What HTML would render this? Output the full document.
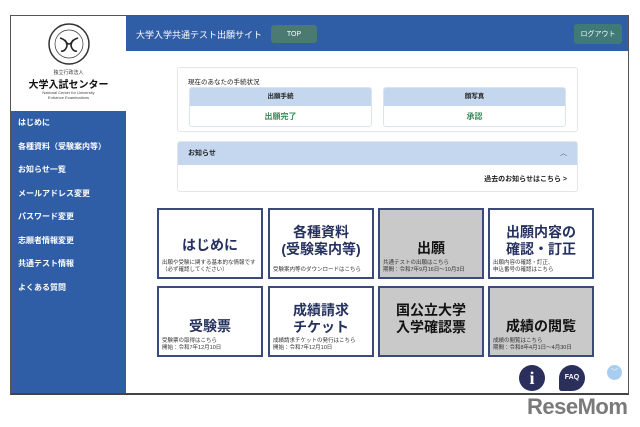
<!DOCTYPE html>
<html><head><meta charset="utf-8"><style>
*{margin:0;padding:0;box-sizing:border-box}
body{width:640px;height:427px;background:#fff;font-family:"Liberation Sans","Noto Sans CJK JP",sans-serif;position:relative;overflow:hidden}
.frame{position:absolute;left:10px;top:15px;width:619px;height:380px;border:1px solid #555;border-bottom:2px solid #444;overflow:hidden}
.side{position:absolute;left:0;top:0;width:115px;height:100%;background:#2f5da6}
.logo{position:absolute;left:0;top:0;width:115px;height:95px;background:#fff;text-align:center}
.nav{position:absolute;left:7px;color:#fff;font-size:8px;font-weight:bold}
.hdr{position:absolute;left:115px;top:0;right:0;height:35px;background:#2f5da6}
.a{position:absolute}
.btn{position:absolute;display:flex;align-items:center;justify-content:center;color:#fff;border-radius:3px;font-size:7px}
.panel{position:absolute;background:#fff;border:1px solid #e3e6ea;border-radius:3px}
.tile{position:absolute;width:106px;height:71px;border:2px solid #3c4a7a;background:#fff;color:#25315f;text-align:center}
.tile.g{background:#c9c9c9}
.tile .t{font-weight:bold;font-size:14px;line-height:17px;position:absolute;left:0;right:0}
.tile .s{position:absolute;left:3px;bottom:3px;font-size:5.5px;line-height:7px;text-align:left;color:#333}
</style></head><body>
<div class="frame">
<div class="side">
 <div class="logo">
  <svg width="44" height="44" viewBox="0 0 44 44" style="position:absolute;left:36px;top:6px"><circle cx="22" cy="22" r="20" fill="none" stroke="#333" stroke-width="1.5"/><circle cx="22" cy="22" r="14" fill="none" stroke="#333" stroke-width=".7"/><path d="M13 16 Q20 18 20 24 Q18 30 14 29 M31 16 Q24 18 24 24 Q26 30 30 29 M18 18 Q22 26 26 18" fill="none" stroke="#222" stroke-width="1.6"/></svg>
  <div class="a" style="left:0;right:0;top:53px;font-size:5px;color:#333">独立行政法人</div>
  <div class="a" style="left:0;right:0;top:60px;font-size:10px;font-weight:bold;color:#111">大学入試センター</div>
  <div class="a" style="left:0;right:0;top:74px;font-size:4px;line-height:5px;color:#444">National Center for University<br>Entrance Examinations</div>
 </div>
 <div class="nav" style="top:101px">はじめに</div>
 <div class="nav" style="top:125px">各種資料（受験案内等）</div>
 <div class="nav" style="top:148px">お知らせ一覧</div>
 <div class="nav" style="top:172px">メールアドレス変更</div>
 <div class="nav" style="top:195px">パスワード変更</div>
 <div class="nav" style="top:219px">志願者情報変更</div>
 <div class="nav" style="top:242px">共通テスト情報</div>
 <div class="nav" style="top:266px">よくある質問</div>
</div>
<div class="hdr">
 <div class="a" style="left:10px;top:12px;color:#fff;font-size:9px;white-space:nowrap">大学入学共通テスト出願サイト</div>
 <div class="btn" style="left:145px;top:9px;width:46px;height:18px;background:#4a7a72">TOP</div>
 <div class="btn" style="right:6px;top:8px;width:48px;height:20px;background:#3f7a78">ログアウト</div>
</div>
<div class="panel" style="left:166px;top:51px;width:401px;height:65px">
 <div class="a" style="left:10px;top:8px;font-size:6.5px;color:#222">現在のあなたの手続状況</div>
 <div class="a" style="left:11px;top:19px;width:183px;height:40px;border:1px solid #dde3ea;border-radius:3px;overflow:hidden">
  <div style="height:18px;background:#c4d7ef;font-size:6.5px;font-weight:bold;text-align:center;line-height:18px;color:#222">出願手続</div>
  <div style="font-size:8px;font-weight:bold;color:#3d8a5a;text-align:center;line-height:21px">出願完了</div>
 </div>
 <div class="a" style="left:205px;top:19px;width:183px;height:40px;border:1px solid #dde3ea;border-radius:3px;overflow:hidden">
  <div style="height:18px;background:#c4d7ef;font-size:6.5px;font-weight:bold;text-align:center;line-height:18px;color:#222">顔写真</div>
  <div style="font-size:8px;font-weight:bold;color:#3d8a5a;text-align:center;line-height:21px">承認</div>
 </div>
</div>
<div class="panel" style="left:166px;top:125px;width:401px;height:51px;overflow:hidden">
 <div style="height:23px;background:#c4d7ef;font-size:7px;font-weight:bold;line-height:23px;padding-left:10px;color:#222">お知らせ<span style="float:right;margin-right:10px;font-weight:normal;color:#555">︿</span></div>
 <div class="a" style="right:10px;top:32px;font-size:7px;font-weight:bold;color:#222">過去のお知らせはこちら &gt;</div>
</div>
<div class="tile" style="left:146px;top:192px"><div class="t" style="top:27px">はじめに</div><div class="s">出願や受験に関する基本的な情報です<br>（必ず確認してください）</div></div>
<div class="tile" style="left:257px;top:192px"><div class="t" style="top:14px">各種資料<br>(受験案内等)</div><div class="s">受験案内等のダウンロードはこちら</div></div>
<div class="tile g" style="left:367px;top:192px"><div class="t" style="top:30px;color:#111">出願</div><div class="s">共通テストの出願はこちら<br>期間：令和7年9月16日〜10月3日</div></div>
<div class="tile" style="left:477px;top:192px"><div class="t" style="top:14px">出願内容の<br>確認・訂正</div><div class="s">出願内容の確認・訂正、<br>申込番号の確認はこちら</div></div>
<div class="tile" style="left:146px;top:270px"><div class="t" style="top:30px">受験票</div><div class="s">受験票の取得はこちら<br>開始：令和7年12月10日</div></div>
<div class="tile" style="left:257px;top:270px"><div class="t" style="top:14px">成績請求<br>チケット</div><div class="s">成績請求チケットの発行はこちら<br>開始：令和7年12月10日</div></div>
<div class="tile g" style="left:367px;top:270px"><div class="t" style="top:14px;color:#111">国公立大学<br>入学確認票</div></div>
<div class="tile g" style="left:477px;top:270px"><div class="t" style="top:30px;color:#111">成績の閲覧</div><div class="s">成績の閲覧はこちら<br>期間：令和8年4月1日〜4月30日</div></div>
<div class="a" style="left:508px;top:349px;width:26px;height:26px;border-radius:50%;background:#2b2f5c;color:#fff;font-family:'Liberation Serif',serif;font-weight:bold;font-size:18px;text-align:center;line-height:26px">i</div>
<div class="a" style="left:548px;top:349px;width:26px;height:26px;border-radius:50% 50% 50% 10%;background:#2b2f5c;color:#fff;font-weight:bold;font-size:7px;text-align:center;line-height:26px">FAQ</div>
<div class="a" style="left:596px;top:349px;width:15px;height:15px;border-radius:50%;background:#a9cdf0;color:#fff;font-size:7px;text-align:center;line-height:15px">﹀</div>
</div>
<div class="a" style="left:527px;top:394px;font-size:22px;font-weight:bold;color:#7a7a7a;letter-spacing:-0.5px">ReseMom</div>
</body></html>
